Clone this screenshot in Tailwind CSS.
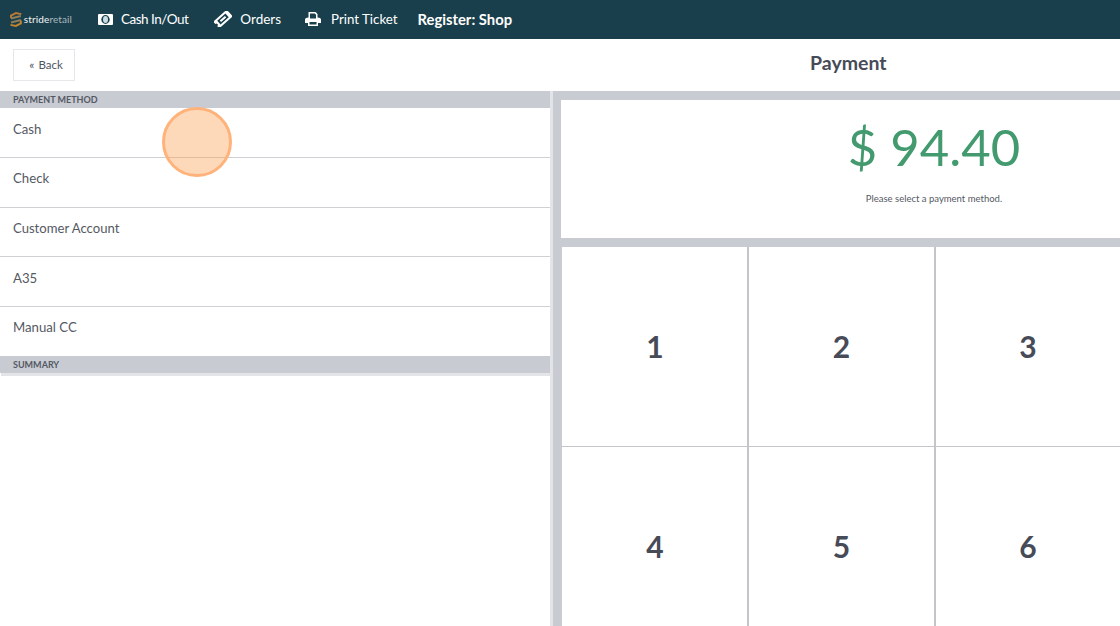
<!DOCTYPE html>
<html lang="en">
<head>
    <meta charset="UTF-8">
    <title>Payment</title>
    <script src="https://cdn.jsdelivr.net/npm/@tailwindcss/browser@4"></script>
</head>
<body class="h-[626px] w-[1120px] overflow-hidden bg-white font-['Lato',sans-serif] text-[#474b57]">
    <!-- top nav -->
    <nav class="flex h-[39px] items-center bg-[#1a3f4c] pb-[1px] pl-[10px] leading-[20px] text-white">
        <div class="flex w-[62px] items-center gap-[2px]">
            <svg width="12" height="15" viewBox="0 0 12 15" fill="none" stroke-width="2">
                <path d="M11.500 2 6 1 1 3.500V6" stroke="#b97a35"/>
                <path d="M1 6.500l10-2.500M1 10.500l10-2.500" stroke="#8f7d58"/>
                <path d="M11 8.500V11.500L6 14 .5 13" stroke="#c5842f"/>
            </svg>
            <span class="text-[10px] font-medium leading-none tracking-[0.1px] text-[#e8eaeb]">stride<span class="font-normal text-[#a9b8bc]">retail</span></span>
        </div>
        <div class="ml-[26px] flex items-center gap-[8px]">
            <svg width="15" height="11" viewBox="0 0 15 11">
                <rect width="15" height="11" rx="1" fill="#fff"/>
                <ellipse cx="7.500" cy="5.500" rx="4.200" ry="4.400" fill="#1a3f4c"/>
                <ellipse cx="7.500" cy="5.500" rx="2.500" ry="3.400" fill="#c9dde4"/>
            </svg>
            <span class="text-[13.500px] tracking-[-0.5px]">Cash In/Out</span>
        </div>
        <div class="ml-[26px] flex items-center gap-[8px]">
            <svg width="18" height="16" viewBox="0 0 18 16">
                <g transform="rotate(-42 9 8)">
                    <path fill="#fff" fill-rule="evenodd" d="M0 3.500h18v9H0v-3a1.500 1.500 0 0 0 0-3zM3.500 5.500v5h11v-5z"/>
                    <path fill="#fff" d="M5.500 7h7v2h-7z"/>
                </g>
            </svg>
            <span class="text-[13.500px]">Orders</span>
        </div>
        <div class="ml-[24px] flex items-center gap-[10px]">
            <svg width="16" height="14" viewBox="0 0 16 14"><path fill="#fff" fill-rule="evenodd" d="M3.500 0h7L12.500 2v3.500c2 0 3.500.8 3.500 2V11h-3v3H3v-3H0V7.500c0-1.200 1.500-2 3.500-2zM5 1.500v5h6V2.800l-1.200-1.300zM4.500 10v2.500h7V10z"/></svg>
            <span class="text-[13.300px]">Print Ticket</span>
        </div>
        <span class="ml-[20px] text-[14.800px] font-bold">Register: Shop</span>
    </nav>

    <!-- toolbar -->
    <div class="flex h-[52px] items-center pl-[13px]">
        <button class="flex h-[32px] w-[62px] items-center justify-center gap-[4px] border border-[#e6e7ea] pb-[1px] pl-[4px] text-[11.500px] text-[#50545f]">
            <span class="text-[12px] leading-none">«</span> Back
        </button>
        <h1 class="ml-[735px] pb-[4px] text-[19.500px] font-bold">Payment</h1>
    </div>

    <div class="flex h-[535px]">
        <!-- left column -->
        <div class="w-[550px] text-[#555963]">
            <div class="flex h-[17px] items-center bg-[#c8cbd2] pl-[13px] text-[9px] font-bold uppercase leading-none">Payment Method</div>
            <div class="flex h-[50px] items-center border-b border-[#cfd0d3] pb-[6px] pl-[13px] text-[13.200px]">Cash</div>
            <div class="flex h-[50px] items-center border-b border-[#cfd0d3] pb-[7px] pl-[13px] text-[13.200px]">Check</div>
            <div class="flex h-[49px] items-center border-b border-[#cfd0d3] pb-[7px] pl-[13px] text-[13.100px]">Customer Account</div>
            <div class="flex h-[50px] items-center border-b border-[#cfd0d3] pb-[6px] pl-[13px] text-[13.200px]">A35</div>
            <div class="flex h-[49px] items-center pb-[7px] pl-[13px] text-[13.200px]">Manual CC</div>
            <div class="flex h-[17px] items-center bg-[#c8cbd2] pl-[13px] text-[9px] font-bold uppercase leading-none">Summary</div>
            <div class="ml-px h-[3px] bg-[#e3e4e7]"></div>
        </div>

        <div class="h-full w-[3px] bg-[#e3e4e7]"></div>

        <!-- right column -->
        <div class="flex w-[567px] flex-col bg-[#c8cbd2] pl-[8px] pt-[9px]">
            <div class="flex h-[138px] shrink-0 flex-col items-center bg-white pl-[187px] pt-[16px]">
                <div class="text-[50.800px] leading-[62px] text-[#429a6e]">$ 94.40</div>
                <div class="mt-[15px] text-[9.500px] leading-[12px] text-[#555963]">Please select a payment method.</div>
            </div>
            <div class="ml-px mt-[9px] grid grid-cols-[187px_187px_1fr] grid-rows-[200px_200px] bg-white text-[30px] font-bold">
                <div class="flex items-center justify-center border-b border-r-2 border-[#c4c5c8] pb-[1px] pl-[1px]">1</div>
                <div class="flex items-center justify-center border-b border-r-2 border-[#c4c5c8] pb-[1px]">2</div>
                <div class="flex items-center justify-center border-b border-[#c4c5c8] pb-[1px]">3</div>
                <div class="flex items-center justify-center border-r-2 border-[#c4c5c8] pb-[1px] pl-[1px]">4</div>
                <div class="flex items-center justify-center border-r-2 border-[#c4c5c8] pb-[1px]">5</div>
                <div class="flex items-center justify-center pb-[1px]">6</div>
            </div>
        </div>
    </div>

    <!-- click highlight -->
    <div class="absolute left-[161.700px] top-[106.700px] h-[70.600px] w-[70.600px] rounded-full border-[3px] border-[#ffb27a] bg-[#fda050]/40"></div>
</body>
</html>
